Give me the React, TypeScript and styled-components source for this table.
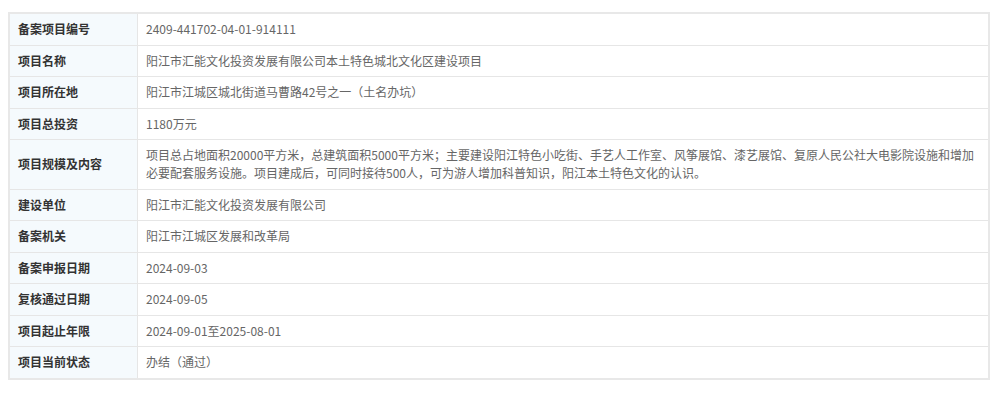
import React from 'react'
import styled, { createGlobalStyle } from 'styled-components'

const GlobalStyle = createGlobalStyle`
    body {
        margin: 0;
        background: #fff;
        font-family: "Microsoft YaHei", "Noto Sans CJK SC", "Noto Sans", sans-serif;
    }
`

const Wrap = styled.div`
    padding: 12px 10px 0 8px;
`

const Table = styled.table`
    width: 982px;
    border-collapse: collapse;
    border: 2px solid #e8e8e8;
    font-size: 12px;
    line-height: 18px;
`

const Row = styled.tr`
    border-bottom: 1px solid #e6e6e6;
`

const Label = styled.td`
    width: 111px;
    padding: 6.25px 8px;
    background: #f5fafd;
    color: #333;
    font-weight: bold;
    border-right: 1px solid #e6e6e6;
    white-space: nowrap;
`

const Value = styled.td`
    padding: 6.25px 8px;
    color: #666;
`

interface Item {
    label: string;
    value: string;
}

const items: Item[] = [
    { label: '备案项目编号', value: '2409-441702-04-01-914111' },
    { label: '项目名称', value: '阳江市汇能文化投资发展有限公司本土特色城北文化区建设项目' },
    { label: '项目所在地', value: '阳江市江城区城北街道马曹路42号之一（土名办坑）' },
    { label: '项目总投资', value: '1180万元' },
    {
        label: '项目规模及内容',
        value: '项目总占地面积20000平方米，总建筑面积5000平方米；主要建设阳江特色小吃街、手艺人工作室、风筝展馆、漆艺展馆、复原人民公社大电影院设施和增加必要配套服务设施。项目建成后，可同时接待500人，可为游人增加科普知识，阳江本土特色文化的认识。',
    },
    { label: '建设单位', value: '阳江市汇能文化投资发展有限公司' },
    { label: '备案机关', value: '阳江市江城区发展和改革局' },
    { label: '备案申报日期', value: '2024-09-03' },
    { label: '复核通过日期', value: '2024-09-05' },
    { label: '项目起止年限', value: '2024-09-01至2025-08-01' },
    { label: '项目当前状态', value: '办结（通过）' },
]

const App: React.FC = () => {
    return (
        <Wrap>
            <GlobalStyle />
            <Table>
                <tbody>
                    {items.map(item => (
                        <Row key={item.label}>
                            <Label>{item.label}</Label>
                            <Value>{item.value}</Value>
                        </Row>
                    ))}
                </tbody>
            </Table>
        </Wrap>
    )
}

export default App
